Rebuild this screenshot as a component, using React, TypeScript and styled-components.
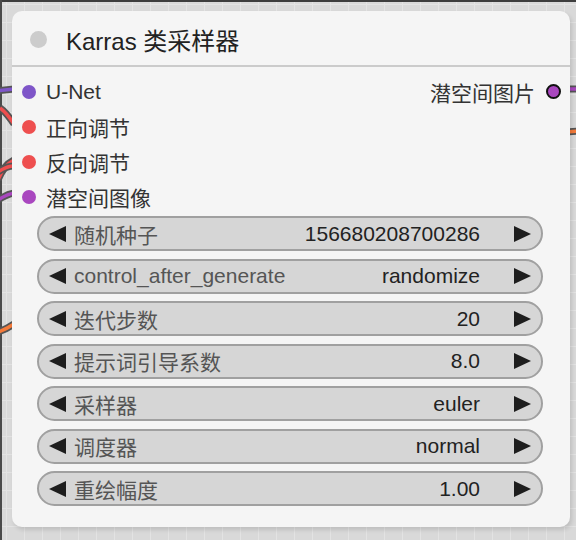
import React from "react";
import styled, { createGlobalStyle } from "styled-components";

const Global = createGlobalStyle`
  html, body { margin: 0; padding: 0; }
  body { font-family: "Liberation Sans", Arial, "Noto Sans CJK SC", sans-serif; }
`;

const Canvas = styled.div`
  position: relative;
  width: 576px;
  height: 540px;
  overflow: hidden;
  box-sizing: border-box;
  padding: 11px 6px 0 12px;
  background-color: #d9d9d9;
  background-image:
    linear-gradient(to right, #e3e3e3 1px, transparent 1px),
    linear-gradient(to bottom, #e3e3e3 1px, transparent 1px);
  background-size: 18px 18px;
  background-position: 6px 4px;
`;

const Wires = styled.svg`
  position: absolute;
  left: 0;
  top: 0;
  width: 576px;
  height: 540px;
`;

const Node = styled.div`
  position: relative;
  width: 558px;
  height: 516px;
  box-sizing: border-box;
  background: #f5f5f5;
  border-radius: 10px;
  box-shadow: 2px 3px 4px rgba(0, 0, 0, 0.12);
  display: flex;
  flex-direction: column;
`;

const Title = styled.div`
  height: 52px;
  display: flex;
  align-items: center;
  gap: 19px;
  padding: 2px 0 0 18px;
  border-bottom: 2px solid #cbcbcb;
  font-size: 24px;
  color: #222;
`;

const TitleDot = styled.span`
  width: 17px;
  height: 17px;
  border-radius: 50%;
  background: #cccccc;
`;

const Slots = styled.div`
  display: grid;
  grid-template-columns: 1fr auto;
  grid-auto-rows: 35px;
  padding: 7px 0 0 0;
`;

const Slot = styled.div<{ $out?: boolean }>`
  display: flex;
  align-items: center;
  gap: ${(p) => (p.$out ? "11px" : "10px")};
  font-size: 21px;
  color: #333;
  justify-content: ${(p) => (p.$out ? "flex-end" : "flex-start")};
  padding: ${(p) => (p.$out ? "0 9px 0 0" : "0 0 0 10px")};
`;

const Dot = styled.span<{ $c: string; $out?: boolean }>`
  width: ${(p) => (p.$out ? "15px" : "14px")};
  height: ${(p) => (p.$out ? "15px" : "14px")};
  box-sizing: border-box;
  border-radius: 50%;
  background: ${(p) => p.$c};
  border: ${(p) => (p.$out ? "2px solid #111" : "none")};
  flex: none;
`;

const Widgets = styled.div`
  display: flex;
  flex-direction: column;
  gap: 7.5px;
  padding: 2px 27px 0 25px;
`;

const Widget = styled.div`
  height: 35px;
  box-sizing: border-box;
  border: 2px solid #a0a0a0;
  border-radius: 18px;
  background: #d6d6d6;
  display: flex;
  align-items: center;
  padding: 0 10px 0 10px;
  font-size: 21px;
`;

const Arrow = styled.span<{ $dir: "l" | "r" }>`
  width: 0;
  height: 0;
  border-top: 8px solid transparent;
  border-bottom: 8px solid transparent;
  ${(p) =>
    p.$dir === "l"
      ? "border-right: 17px solid #1e1e1e; margin-right: 8px;"
      : "border-left: 17px solid #1e1e1e; margin-left: 34px;"}
  flex: none;
`;

const Label = styled.span`
  color: #555;
  flex: 1;
  white-space: nowrap;
`;

const Value = styled.span`
  color: #222;
  white-space: nowrap;
`;

const inputs = [
  { name: "U-Net", color: "#7e55c8" },
  { name: "正向调节", color: "#ee4f4f" },
  { name: "反向调节", color: "#ee4f4f" },
  { name: "潜空间图像", color: "#a947bf" },
];

const widgets = [
  ["随机种子", "156680208700286"],
  ["control_after_generate", "randomize"],
  ["迭代步数", "20"],
  ["提示词引导系数", "8.0"],
  ["采样器", "euler"],
  ["调度器", "normal"],
  ["重绘幅度", "1.00"],
];

const Wire = ({ d, color }: { d: string; color: string }) => (
  <g fill="none" strokeLinecap="butt">
    <path d={d} stroke="#555" strokeWidth={7} />
    <path d={d} stroke={color} strokeWidth={3.5} />
  </g>
);

export default function App() {
  return (
    <>
      <Global />
      <Canvas>
        <Wires viewBox="0 0 576 540">
          <rect x="0" y="0" width="576" height="2" fill="#3d3d3d" />
          <rect x="0" y="0" width="2" height="540" fill="#4a4a4a" />
          <Wire d="M-4 91 L14 89" color="#7e55c8" />
          <Wire d="M0 108 C6 112 10 118 14 124" color="#ee4f4f" />
          <Wire d="M-2 180 C2 170 6 164 14 160" color="#ee4f4f" />
          <Wire d="M-2 172 C4 168 8 166 14 166" color="#ee4f4f" />
          <Wire d="M-2 200 C4 196 8 194 14 193" color="#a947bf" />
          <Wire d="M-2 332 C4 330 8 328 14 324" color="#f47a3a" />
          <Wire d="M566 89 L580 89" color="#a947bf" />
          <Wire d="M566 132 L580 131" color="#f47a3a" />
        </Wires>
        <Node>
          <Title>
            <TitleDot />
            Karras 类采样器
          </Title>
          <Slots>
            {inputs.map((s, i) => (
              <React.Fragment key={s.name}>
                <Slot>
                  <Dot $c={s.color} />
                  {s.name}
                </Slot>
                {i === 0 ? (
                  <Slot $out>
                    潜空间图片
                    <Dot $c="#a947bf" $out />
                  </Slot>
                ) : (
                  <span />
                )}
              </React.Fragment>
            ))}
          </Slots>
          <Widgets>
            {widgets.map(([l, v]) => (
              <Widget key={l}>
                <Arrow $dir="l" />
                <Label>{l}</Label>
                <Value>{v}</Value>
                <Arrow $dir="r" />
              </Widget>
            ))}
          </Widgets>
        </Node>
      </Canvas>
    </>
  );
}
